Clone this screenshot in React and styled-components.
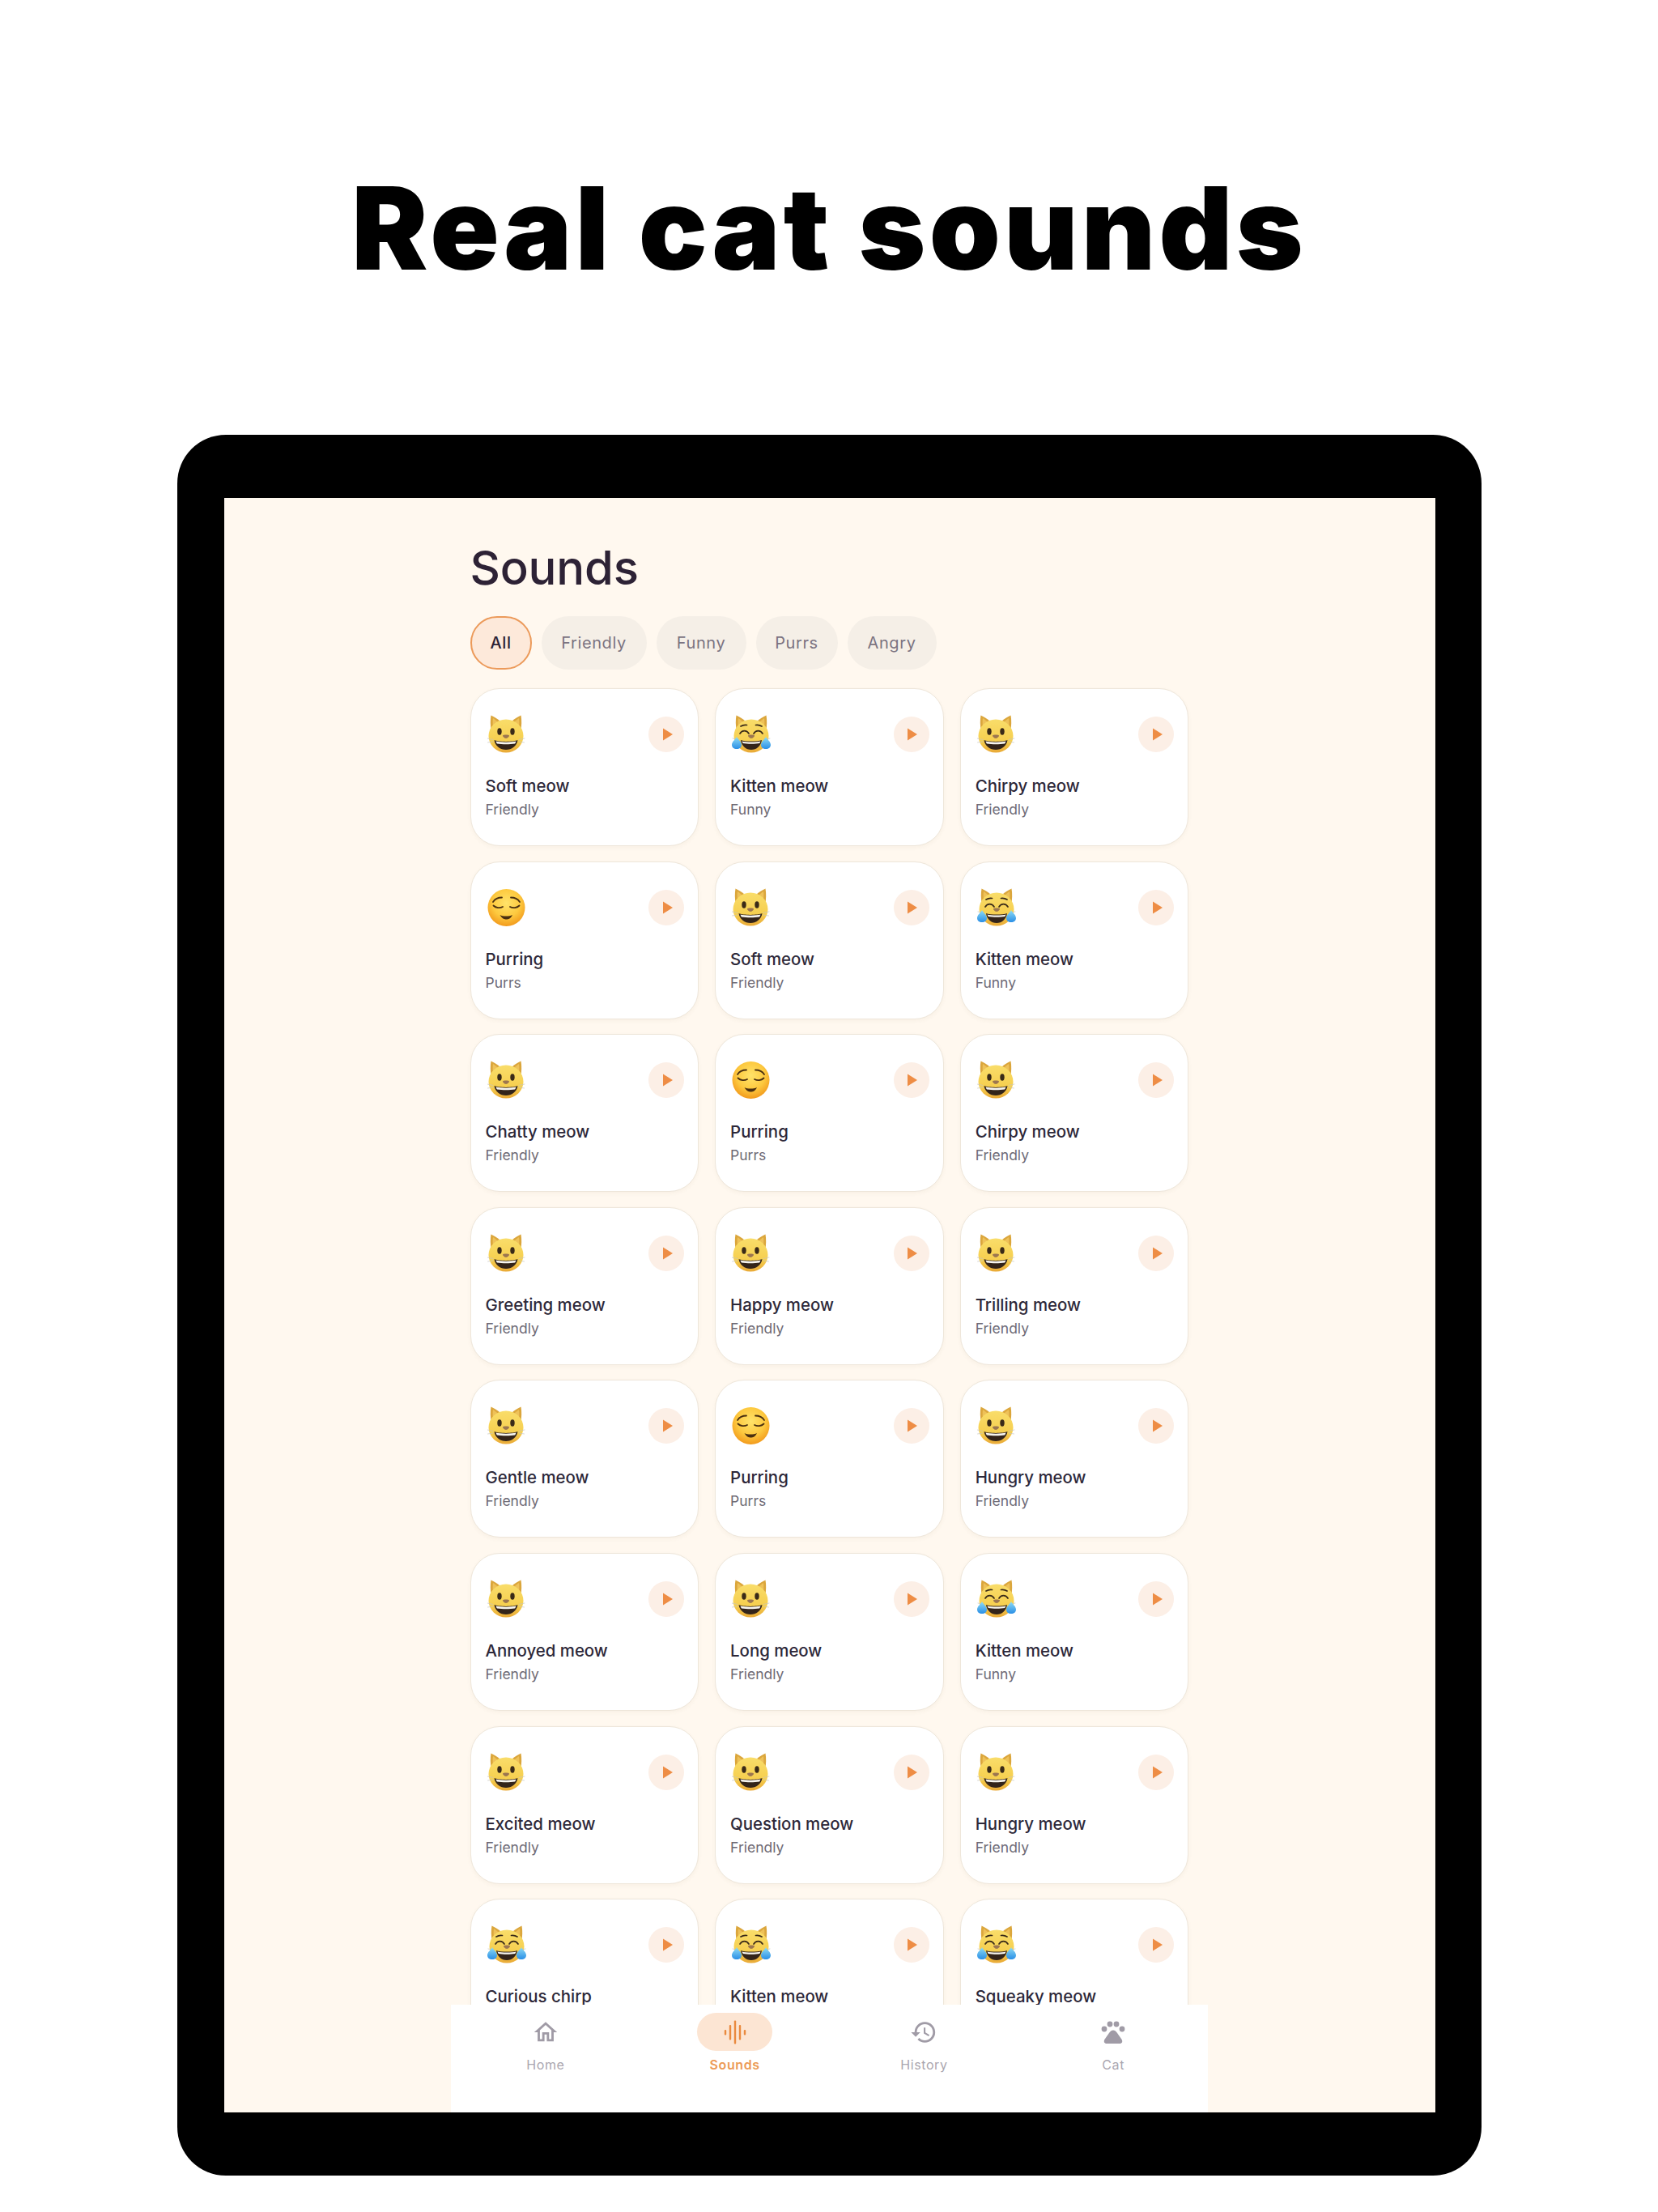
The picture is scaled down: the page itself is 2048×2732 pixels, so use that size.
import React from "react";
import styled, { createGlobalStyle } from "styled-components";

const Global = createGlobalStyle`
  html, body { margin: 0; padding: 0; background: #fff; }
  * { box-sizing: border-box; }
  body { font-family: "Inter", "Liberation Sans", sans-serif; }
`;

const Page = styled.div`
  width: 2048px;
  height: 2732px;
  background: #fff;
  overflow: hidden;
`;
const Hero = styled.header`
  height: 537px;
  padding-top: 202px;
  text-align: center;
`;
const Headline = styled.h1`
  margin: 0;
  font-size: 141px;
  line-height: 160px;
  font-weight: 900;
  letter-spacing: 4.2px;
  color: #000;
`;
const Tablet = styled.div`
  margin-left: 219px;
  width: 1611px;
  height: 2150px;
  padding: 78px 57px 78px 58px;
  background: #000;
  border-radius: 60px;
`;
const Screen = styled.main`
  position: relative;
  height: 1994px;
  background: #fff8ef;
  overflow: hidden;
`;
const Column = styled.div`
  width: 935px;
  margin: 0 auto;
  padding: 51px 24px 0 23px;
`;
const Title = styled.h2`
  margin: 0 0 25px;
  font-size: 58px;
  line-height: 70px;
  font-weight: 500;
  letter-spacing: -0.2px;
  color: #2d2235;
`;
const Filters = styled.div`
  display: flex;
  gap: 12px;
  margin-bottom: 23px;
`;
const Filter = styled.div`
  height: 66px;
  width: ${(p) => p.$w}px;
  display: flex;
  align-items: center;
  justify-content: center;
  border-radius: 33px;
  font-size: 20px;
  font-weight: ${(p) => (p.$active ? 500 : 400)};
  letter-spacing: 0.6px;
  color: ${(p) => (p.$active ? "#2d2235" : "#7b7381")};
  background: ${(p) => (p.$active ? "#fde9da" : "#f5efe7")};
  border: ${(p) => (p.$active ? "2.5px solid #ec9a5a" : "none")};
`;
const Grid = styled.div`
  display: grid;
  grid-template-columns: repeat(3, 282.6px);
  column-gap: 20px;
  row-gap: 18.6px;
`;
const Card = styled.article`
  height: 195px;
  padding: 32px 17px 0 18px;
  background: #fff;
  border: 1.5px solid #eee6da;
  border-radius: 36px;
  box-shadow: 0 2px 5px rgba(120, 90, 50, 0.05);
`;
const CardTop = styled.div`
  display: flex;
  align-items: center;
  justify-content: space-between;
  height: 48px;
`;
const FaceSlot = styled.div`
  margin-left: 2px;
  width: 48px;
  height: 48px;
`;
const PlayButton = styled.div`
  width: 44px;
  height: 44px;
  border-radius: 50%;
  background: #fcefe6;
  display: flex;
  align-items: center;
  justify-content: center;
`;
const CardName = styled.div`
  margin-top: 25px;
  font-size: 20.4px;
  line-height: 30px;
  font-weight: 500;
  color: #2d2839;
`;
const CardTag = styled.div`
  margin-top: 1px;
  font-size: 17.5px;
  line-height: 26px;
  color: #6e6a75;
`;
const Nav = styled.nav`
  position: absolute;
  left: 280px;
  bottom: 0;
  width: 935px;
  height: 133px;
  background: #fff;
  display: grid;
  grid-template-columns: repeat(4, 1fr);
  padding-top: 10px;
`;
const NavItem = styled.div`
  display: flex;
  flex-direction: column;
  align-items: center;
`;
const NavIcon = styled.div`
  width: 93px;
  height: 47px;
  border-radius: 24px;
  display: flex;
  align-items: center;
  justify-content: center;
  background: ${(p) => (p.$active ? "#fce5d3" : "transparent")};
  color: ${(p) => (p.$active ? "#ea8a3e" : "#a09ba6")};
`;
const NavLabel = styled.div`
  margin-top: 7px;
  font-size: 16px;
  line-height: 20px;
  letter-spacing: 0.6px;
  font-weight: ${(p) => (p.$active ? 600 : 400)};
  color: ${(p) => (p.$active ? "#ec9a56" : "#aaa6af")};
`;

const Play = () => (
  <svg width="14" height="16" viewBox="0 0 14 16" style={{ marginLeft: 3 }}>
    <path d="M1 .5 13 8 1 15.5z" fill="#ee8d45" />
  </svg>
);

const CatBase = ({ id, children }) => (
  <>
    <defs>
      <linearGradient id={id} x1="0" y1="0" x2="0" y2="1">
        <stop offset="0" stopColor="#f9dd6a" />
        <stop offset="0.65" stopColor="#f6cf4f" />
        <stop offset="1" stopColor="#e9a936" />
      </linearGradient>
    </defs>
    <path d="M4.5 0.5 C8 2 13 5 16 8 L5 20 C3.5 14 3.5 6 4.5 0.5z" fill="#dba63c" />
    <path d="M41.5 0.5 C38 2 33 5 30 8 L41 20 C42.5 14 42.5 6 41.5 0.5z" fill="#dba63c" />
    <path d="M7 4 C9 5 11 7 13 9 L7 14 C6.5 11 6.5 7 7 4z" fill="#eec159" />
    <path d="M39 4 C37 5 35 7 33 9 L39 14 C39.5 11 39.5 7 39 4z" fill="#eec159" />
    <ellipse cx="23" cy="26" rx="21.5" ry="20.5" fill={`url(#${id})`} />
    {children}
    <path d="M23 24.5 c1.8 0 4 .2 4 1.2 c0 1.3-2.5 3.2-4 3.2 s-4-1.9-4-3.2 c0-1 2.2-1.2 4-1.2z" fill="#9c7650" />
    <g stroke="#c9c5bb" strokeWidth="0.7" fill="none" strokeLinecap="round">
      <path d="M0 29 L7 30.5" />
      <path d="M0.5 34 L7 33" />
      <path d="M46 29 L39 30.5" />
      <path d="M45.5 34 L39 33" />
    </g>
  </>
);

const Grin = () => (
  <svg width="48" height="48" viewBox="0 0 48 48">
    <CatBase id="catGrin">
      <ellipse cx="15" cy="20.5" rx="2.7" ry="4.2" fill="#3a2a18" />
      <ellipse cx="31" cy="20.5" rx="2.7" ry="4.2" fill="#3a2a18" />
      <path d="M8.5 31 C14 33.5 32 33.5 37.5 31 C36.5 38.5 30 43 23 43 S9.5 38.5 8.5 31z" fill="#33241a" />
      <path d="M10.5 32.5 C16 34 30 34 35.5 32.5 C35 34 34.5 35 34 35.5 C28 36.5 18 36.5 12 35.5 C11.5 35 11 34 10.5 32.5z" fill="#f7f5ef" />
    </CatBase>
  </svg>
);

const Tear = ({ x }) => (
  <path
    d={`M${x} 27 C${x + 1.5} 30 ${x + 6} 33 ${x + 6} 37 C${x + 6} 40 ${x + 3.5} 42 ${x} 42 S${x - 6} 40 ${x - 6} 37 C${x - 6} 33 ${x - 1.5} 30 ${x} 27z`}
    fill="url(#tearFill)"
  />
);

const Joy = () => (
  <svg width="48" height="48" viewBox="0 0 48 48">
    <defs>
      <linearGradient id="tearFill" x1="0" y1="0" x2="0" y2="1">
        <stop offset="0" stopColor="#8fdcf5" />
        <stop offset="1" stopColor="#2a8fe6" />
      </linearGradient>
    </defs>
    <g transform="translate(1 0)">
      <CatBase id="catJoy">
        <g stroke="#3a2a18" strokeWidth="1.7" fill="none" strokeLinecap="round">
          <path d="M9 23 C11.5 18.5 17.5 18.5 20 23" />
          <path d="M26 23 C28.5 18.5 34.5 18.5 37 23" />
          <path d="M10 14 C12.5 12.5 15 12 17.5 12.5" />
          <path d="M36 14 C33.5 12.5 31 12 28.5 12.5" />
        </g>
        <path d="M10 31 C15 33 31 33 36 31 C35 38.5 29.5 43 23 43 S11 38.5 10 31z" fill="#33241a" />
        <path d="M11.5 32.5 C16 33.8 30 33.8 34.5 32.5 C34 33.8 33.6 34.6 33.2 35 C28 36 18 36 12.8 35 C12.4 34.6 12 33.8 11.5 32.5z" fill="#f7f5ef" />
      </CatBase>
    </g>
    <Tear x={6} />
    <Tear x={42} />
  </svg>
);

const Relieved = () => (
  <svg width="48" height="48" viewBox="0 0 48 48">
    <defs>
      <radialGradient id="faceFill" cx="0.5" cy="0.38" r="0.62">
        <stop offset="0" stopColor="#ffe36a" />
        <stop offset="0.6" stopColor="#fdc93f" />
        <stop offset="1" stopColor="#f29a1c" />
      </radialGradient>
    </defs>
    <circle cx="23.5" cy="24" r="23" fill="url(#faceFill)" />
    <g stroke="#4a2f10" fill="none" strokeLinecap="round" strokeWidth="1.8">
      <path d="M7 17 C9.5 13 14 11.5 18 11.5" />
      <path d="M40 17 C37.5 13 33 11.5 29 11.5" />
      <path d="M7.5 21.5 C10.5 24.5 15.5 25 19 23" />
      <path d="M39.5 21.5 C36.5 24.5 31.5 25 28 23" />
    </g>
    <path d="M15.5 33 C19 35 27 35 31 33 C29 37.5 26 38.5 23.5 38.5 S18 37.5 15.5 33z" fill="#4a2f10" />
  </svg>
);

const faces = { grin: Grin, joy: Joy, calm: Relieved };

const sounds = [
  ["Soft meow", "Friendly", "grin"],
  ["Kitten meow", "Funny", "joy"],
  ["Chirpy meow", "Friendly", "grin"],
  ["Purring", "Purrs", "calm"],
  ["Soft meow", "Friendly", "grin"],
  ["Kitten meow", "Funny", "joy"],
  ["Chatty meow", "Friendly", "grin"],
  ["Purring", "Purrs", "calm"],
  ["Chirpy meow", "Friendly", "grin"],
  ["Greeting meow", "Friendly", "grin"],
  ["Happy meow", "Friendly", "grin"],
  ["Trilling meow", "Friendly", "grin"],
  ["Gentle meow", "Friendly", "grin"],
  ["Purring", "Purrs", "calm"],
  ["Hungry meow", "Friendly", "grin"],
  ["Annoyed meow", "Friendly", "grin"],
  ["Long meow", "Friendly", "grin"],
  ["Kitten meow", "Funny", "joy"],
  ["Excited meow", "Friendly", "grin"],
  ["Question meow", "Friendly", "grin"],
  ["Hungry meow", "Friendly", "grin"],
  ["Curious chirp", "Funny", "joy"],
  ["Kitten meow", "Funny", "joy"],
  ["Squeaky meow", "Funny", "joy"],
];

const filters = [
  ["All", 76, true],
  ["Friendly", 130],
  ["Funny", 111],
  ["Purrs", 101],
  ["Angry", 110],
];

const HomeIcon = () => (
  <svg width="34" height="34" viewBox="0 0 24 24" fill="currentColor">
    <path d="M12 5.69l5 4.5V18h-2v-6H9v6H7v-7.81l5-4.5M12 3L2 12h3v8h6v-6h2v6h6v-8h3L12 3z" />
  </svg>
);
const WaveIcon = () => (
  <svg width="34" height="34" viewBox="0 0 34 34" fill="currentColor">
    <rect x="3.8" y="14" width="2.4" height="6.5" rx="1" />
    <rect x="9.8" y="8" width="2.4" height="18.5" rx="1" />
    <rect x="15.8" y="2.5" width="2.4" height="29" rx="1" />
    <rect x="21.8" y="8" width="2.4" height="18.5" rx="1" />
    <rect x="27.8" y="14" width="2.4" height="6.5" rx="1" />
  </svg>
);
const HistoryIcon = () => (
  <svg width="34" height="34" viewBox="0 0 24 24" fill="currentColor">
    <path d="M13 3a9 9 0 0 0-9 9H1l3.89 3.89.07.14L9 12H6c0-3.87 3.13-7 7-7s7 3.13 7 7-3.13 7-7 7c-1.93 0-3.68-.79-4.94-2.06l-1.42 1.42A8.954 8.954 0 0 0 13 21a9 9 0 0 0 0-18zm-1 5v5l4.28 2.54.72-1.21-3.5-2.08V8H12z" />
  </svg>
);
const PawIcon = () => (
  <svg width="34" height="34" viewBox="0 0 34 34" fill="currentColor">
    <circle cx="6" cy="13" r="3.4" />
    <circle cx="13" cy="7" r="3.4" />
    <circle cx="21" cy="7" r="3.4" />
    <circle cx="28" cy="13" r="3.4" />
    <path d="M17 14.5c2 0 3.2 1 4.7 3l5.6 8c2 3 .6 5.5-2.3 5.5H9c-2.9 0-4.3-2.5-2.3-5.5l5.6-8c1.5-2 2.7-3 4.7-3z" />
  </svg>
);

const navItems = [
  ["Home", HomeIcon],
  ["Sounds", WaveIcon, true],
  ["History", HistoryIcon],
  ["Cat", PawIcon],
];

export default function App() {
  return (
    <Page>
      <Global />
      <Hero>
        <Headline>Real cat sounds</Headline>
      </Hero>
      <Tablet>
        <Screen>
          <Column>
            <Title>Sounds</Title>
            <Filters>
              {filters.map(([label, w, active]) => (
                <Filter key={label} $w={w} $active={active}>
                  {label}
                </Filter>
              ))}
            </Filters>
            <Grid>
              {sounds.map(([name, tag, face], i) => {
                const Face = faces[face];
                return (
                  <Card key={i}>
                    <CardTop>
                      <FaceSlot>
                        <Face />
                      </FaceSlot>
                      <PlayButton>
                        <Play />
                      </PlayButton>
                    </CardTop>
                    <CardName>{name}</CardName>
                    <CardTag>{tag}</CardTag>
                  </Card>
                );
              })}
            </Grid>
          </Column>
          <Nav>
            {navItems.map(([label, Icon, active]) => (
              <NavItem key={label}>
                <NavIcon $active={active}>
                  <Icon />
                </NavIcon>
                <NavLabel $active={active}>{label}</NavLabel>
              </NavItem>
            ))}
          </Nav>
        </Screen>
      </Tablet>
    </Page>
  );
}
